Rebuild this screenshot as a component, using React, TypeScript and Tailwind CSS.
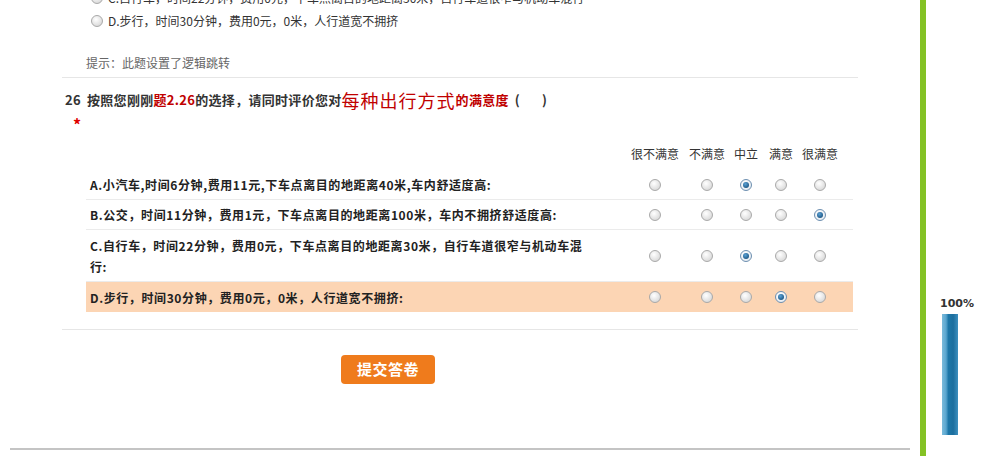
import React from "react";

const F = { fontFamily: '"Noto Sans CJK SC", "Liberation Sans", sans-serif' };

function Radio({ checked = false }: { checked?: boolean }) {
  return (
    <span
      className={
        "inline-flex w-[12px] h-[12px] rounded-full border items-center justify-center shrink-0 " +
        (checked
          ? "border-[#6d8fb0] bg-[radial-gradient(circle_at_40%_35%,#ffffff,#dfe6ee)]"
          : "border-[#a9a9a9] bg-[radial-gradient(circle_at_40%_35%,#ffffff,#cfcfcf)]")
      }
    >
      {checked && (
        <span className="block w-[6px] h-[6px] rounded-full bg-[radial-gradient(circle_at_40%_35%,#5aa2d6,#0b3f6a)]" />
      )}
    </span>
  );
}

const rows: { text: React.ReactNode; sel: number; hl?: boolean; tall?: boolean }[] = [
  { text: "A.小汽车,时间6分钟,费用11元,下车点离目的地距离40米,车内舒适度高:", sel: 2 },
  { text: "B.公交，时间11分钟，费用1元，下车点离目的地距离100米，车内不拥挤舒适度高:", sel: 4 },
  { text: "C.自行车，时间22分钟，费用0元，下车点离目的地距离30米，自行车道很窄与机动车混行:", sel: 2, tall: true },
  { text: "D.步行，时间30分钟，费用0元，0米，人行道宽不拥挤:", sel: 3, hl: true },
];

const headers = ["很不满意", "不满意", "中立", "满意", "很满意"];

export default function App() {
  return (
    <div className="flex h-[456px] w-[985px] overflow-hidden bg-white text-[#333]" style={F}>
      {/* main column */}
      <div className="w-[920px] flex flex-col">
        <div className="-mt-[14px] pl-[91px] text-[12px]">
          <div className="flex items-center h-[23px] gap-[5px]">
            <Radio />
            <span>C.自行车，时间22分钟，费用0元，下车点离目的地距离30米，自行车道很窄与机动车混行</span>
          </div>
          <div className="flex items-center h-[23px] gap-[5px]">
            <Radio />
            <span>D.步行，时间30分钟，费用0元，0米，人行道宽不拥挤</span>
          </div>
        </div>

        <div className="ml-[62px] w-[796px] border-b border-[#e6e6e6] pt-[21px] pb-[4px] pl-[24px] text-[12px] leading-[20px] text-[#666]">
          提示：此题设置了逻辑跳转
        </div>

        <div className="ml-[62px] w-[796px] border-b border-[#e6e6e6] pt-[11px] pb-[17px]">
          <div className="flex items-center h-[22px] pl-[3px] text-[13px] font-bold text-[#333] whitespace-nowrap tracking-[0.3px]">
            <span className="w-[22px]">26</span>
            <span>按照您刚刚</span>
            <span className="text-[#c00000]">题2.26</span>
            <span>的选择，请同时评价您对</span>
            <span className="text-[18px] font-normal text-[#c00000] tracking-[1px]">每种出行方式</span>
            <span className="text-[#c00000]">的满意度</span>
            <span className="ml-[6px]">(</span>
            <span className="w-[22px]" />
            <span>)</span>
          </div>
          <div className="h-[22px] pl-[11px] text-[16px] font-bold text-[#e00000] leading-[26px]">*</div>

          <div className="ml-[24px] w-[767px] mt-[11px]">
            <div className="grid grid-cols-[544px_50px_54px_24px_46px_32px_1fr] h-[20px] items-center text-[12px] text-[#333]">
              <span />
              {headers.map((h) => (
                <span key={h} className="flex justify-center whitespace-nowrap">
                  {h}
                </span>
              ))}
              <span />
            </div>
            <div className="mt-[6px]">
              {rows.map((r, i) => (
                <div
                  key={i}
                  className={
                    "grid grid-cols-[544px_50px_54px_24px_46px_32px_1fr] items-center " +
                    (r.hl ? "bg-[#fcd5b4] h-[30px] " : "border-b border-[#ebebeb] ") +
                    (r.tall ? "h-[52px] " : r.hl ? "" : "h-[30px] ")
                  }
                >
                  <span className="pl-[4px] w-[502px] text-[12px] font-bold leading-[21px] text-[#222] tracking-[0.6px]">
                    {r.text}
                  </span>
                  {[0, 1, 2, 3, 4].map((c) => (
                    <span key={c} className="flex justify-center">
                      <Radio checked={c === r.sel} />
                    </span>
                  ))}
                  <span />
                </div>
              ))}
            </div>
          </div>
        </div>

        <div className="ml-[341px] mt-[25px] w-[94px] h-[29px] rounded-[4px] bg-[#ef7b1c] flex items-center justify-center text-white font-bold text-[15px] tracking-[0.5px]">
          提交答卷
        </div>

        <div className="mt-auto mb-[6px] ml-[10px] w-[900px] h-[2px] bg-[#c4c4c4]" />
      </div>

      {/* green divider */}
      <div className="w-[6px] h-full bg-[#84c225]" />

      {/* progress */}
      <div className="flex-1 flex flex-col items-start pt-[297px] pl-[14px]">
        <span className="text-[11px] font-bold leading-[14px] text-[#333]" style={{ fontFamily: '"DejaVu Sans", sans-serif' }}>
          100%
        </span>
        <div className="mt-[3px] ml-[2px] w-[16px] h-[121px] bg-[linear-gradient(to_right,#7bbbdb_0%,#5aa6cf_25%,#1d77a8_40%,#1c6e9e_70%,#3d8fbe_100%)]" />
      </div>
    </div>
  );
}
